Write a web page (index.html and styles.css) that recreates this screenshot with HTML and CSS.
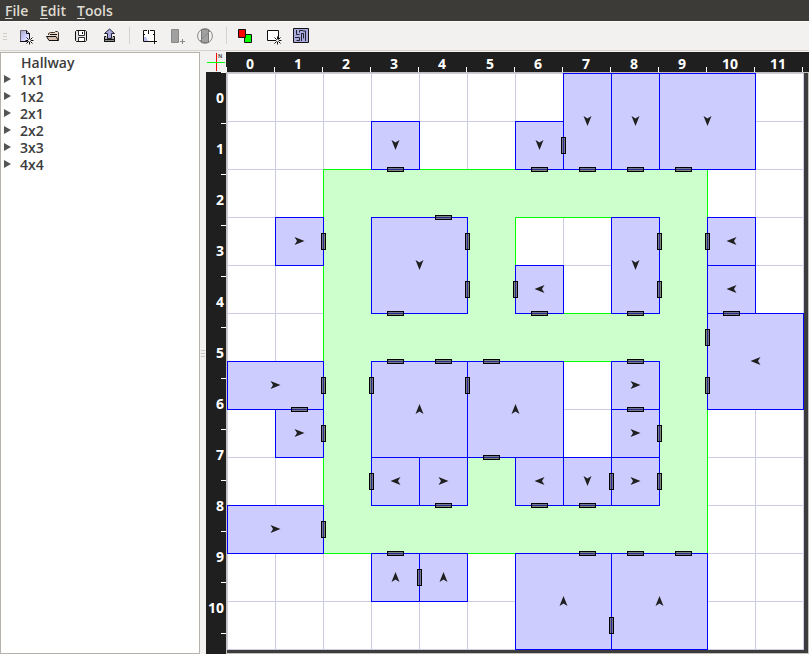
FILE: index.html
```html
<!DOCTYPE html>
<html lang="en">
<head>
<meta charset="utf-8">
<title>Map Editor</title>
<link rel="stylesheet" href="styles.css">
</head>
<body>
<nav class="menubar">
  <span class="menu menu-file"><u>F</u>ile</span>
  <span class="menu menu-edit"><u>E</u>dit</span>
  <span class="menu menu-tools"><u>T</u>ools</span>
</nav>
<div class="toolbar">
  <div class="handle"><i></i><i></i><i></i></div>
  <div class="tool"><svg viewBox="0 0 16 16"><defs><linearGradient id="page" x1="0" y1="0" x2="1" y2="1"><stop offset="0" stop-color="#aab"/><stop offset=".5" stop-color="#ccf"/><stop offset="1" stop-color="#fff"/></linearGradient></defs><path d="M2.5 2.5h6l3 3v8h-9z" fill="url(#page)" stroke="#667" /><path d="M2 13.5h7M8.500 2.500v3h3v3" fill="none" stroke="#111"/><use href="#star" x="11.500" y="12.500"/></svg></div>
  <div class="tool"><svg viewBox="0 0 16 16"><path d="M2.500 7v-1.500l2-1h4l1-1h2l1 1V12" fill="#e8d8cc" stroke="#432"/><path d="M.5 8.500h9.500l2.500 4H3z" fill="#d8c0b0" stroke="#111"/><path d="M4 6.500h7" stroke="#111"/></svg></div>
  <div class="tool"><svg viewBox="0 0 16 16"><path d="M2.500 2.500h9l1 1v9l-1 1h-9l-1-1v-9z" fill="#e4e4e8" stroke="#111"/><path d="M4.500 3v4.500h6V3M4.500 13V9.500h6V13" fill="#fff" stroke="#333"/><path d="M8.500 4v2" stroke="#111"/></svg></div>
  <div class="tool"><svg viewBox="0 0 16 16"><path d="M4 8.500H2.500v5h10v-5H11" fill="#aaa" stroke="#111"/><path d="M2.500 11.500h10v2h-10z" fill="#889088" stroke="#111"/><path d="M5.500 10.500v-5h-3l5-4.500 5 4.500h-3v5z" fill="#a8a8dd" stroke="#223"/></svg></div>
  <div class="separator"></div>
  <div class="tool"><svg viewBox="0 0 16 16"><path d="M2.500 2.500h11v11h-11z" fill="#fff"/><path d="M3 9h2l2 4H3z" fill="#bbe"/><path d="M6 2.500H2.500v11H11M9 2.500h4.500V11M7.500 2v4M2 6.500h2M12 6.500h2" fill="none" stroke="#111"/><path d="M13.500 11v5M11 13.500h5" stroke="#fff" stroke-width="2"/><path d="M13.500 11v5M11 13.500h5" stroke="#111"/></svg></div>
  <div class="tool"><svg viewBox="0 0 16 16"><path d="M2.500 1.500h7v13h-7z" fill="#a0a0a0" stroke="#888"/><path d="M13.500 11v5M11 13.500h5" stroke="#888"/></svg></div>
  <div class="tool"><svg viewBox="0 0 16 16"><path d="M4.500 1.500h7v13h-7z" fill="#a0a0a0" stroke="#777"/><circle cx="8" cy="8" r="7.400" fill="none" stroke="#888"/><path d="M3 13L13 3" stroke="#888"/></svg></div>
  <div class="separator separator-wide"></div>
  <div class="tool"><svg viewBox="0 0 16 16"><path d="M7.500 6.500h7v8h-7z" fill="#0f0" stroke="#111"/><path d="M1.500 1.500h7v8h-7z" fill="#f00" stroke="#111"/></svg></div>
  <div class="tool"><svg viewBox="0 0 16 16"><path d="M2.500 2.500h11v10h-11z" fill="#fff" stroke="#111"/><use href="#star" x="12.500" y="12.500"/></svg></div>
  <div class="tool"><svg viewBox="0 0 16 16"><path d="M.5.5h15v14H.5z" fill="#aaaadd" stroke="#111"/><path d="M3.500 2v4.500h3M6.500 2.500H10M6.500 2.500v2M2 9.500h4.500v3M3.500 12.500h3M8.500 13V5.500h2v5M10.500 5.500h-2M12.500 13V3H10" fill="none" stroke="#223"/></svg></div>
</div>
<main class="workspace">
  <ul class="palette">
    <li class="leaf">Hallway</li>
    <li class="branch">1x1</li>
    <li class="branch">1x2</li>
    <li class="branch">2x1</li>
    <li class="branch">2x2</li>
    <li class="branch">3x3</li>
    <li class="branch">4x4</li>
  </ul>
  <div class="splitter"><i></i><i></i><i></i></div>
  <section class="editor">
    <svg class="compass" viewBox="0 0 20 20"><path d="M10.500 1v18" stroke="#f00"/><path d="M1 10.500h18" stroke="#0f0"/><text x="12" y="6">N</text></svg>
    <div class="ruler ruler-x"></div>
    <div class="ruler ruler-y"></div>
    <div class="viewport"><svg class="plan" viewBox="0 0 577 577"></svg></div>
  </section>
</main>
<svg class="symbols" width="0" height="0"><defs>
  <g id="star"><path d="M0-4v8M-4 0h8M-3-3l6 6M3-3l-6 6" stroke="#111" fill="none"/><circle r="1.300" fill="#fff"/></g>
  <path id="arrow" d="M5 0L-5-4L-2.500 0L-5 4Z"/>
</defs></svg>
<script src="plan.js"></script>
</body>
</html>
```
FILE: styles.css
```css
* { box-sizing: border-box; }
body {
  margin: 0;
  width: 809px;
  height: 654px;
  overflow: hidden;
  display: flex;
  flex-direction: column;
  background: #f2f1f0;
  color: #3c3c3c;
  font: 600 14px/17px "Open Sans", "Noto Sans", sans-serif;
}
.symbols { position: absolute; }
.menubar {
  height: 21px;
  flex: none;
  display: flex;
  padding-left: 5px;
  background: #3c3b37;
  color: #dfdbd2;
  line-height: 22px;
}
.menu u { text-underline-offset: 2px; text-decoration-thickness: 1px; }
.menu-file { width: 35px; }
.menu-edit { width: 37px; }
.toolbar {
  height: 30px;
  flex: none;
  display: flex;
  border-top: 1px solid #fbfbfa;
  border-bottom: 1px solid #d6d3d0;
}
.handle {
  width: 12px;
  padding: 11px 0 0 3px;
  display: flex;
  flex-direction: column;
  gap: 2px;
}
.handle i { width: 4px; height: 1px; background: #d0cdc9; }
.tool { width: 28px; padding: 6px 6px 0; }
.tool svg { display: block; width: 16px; height: 16px; overflow: visible; }
.separator { width: 11px; padding: 5px 5px 0; }
.separator-wide { width: 12px; padding-left: 7px; padding-right: 4px; }
.separator::before { content: ""; display: block; height: 17px; width: 1px; background: #d5d2ce; }
.workspace { flex: 1; display: flex; padding-top: 1px; min-height: 0; }
.palette {
  width: 200px;
  height: 602px;
  margin: 0;
  padding: 1px 0 0;
  list-style: none;
  background: #fff;
  border: 1px solid #b6b2ab;
}
.palette li { height: 17px; padding-left: 19px; }
.palette .leaf { padding-left: 20px; }
.branch { display: flex; }
.branch::before {
  content: "";
  width: 7px;
  height: 8px;
  margin: 4px 9px 0 -16px;
  background: #555;
  clip-path: polygon(0 0, 100% 50%, 0 100%);
}
.splitter {
  width: 6px;
  display: flex;
  flex-direction: column;
  justify-content: center;
  align-items: center;
  gap: 2px;
}
.splitter i { width: 4px; height: 1px; background: #ccc8c4; }
.editor {
  flex: 1;
  display: grid;
  grid-template-columns: 20px 583px;
  grid-template-rows: 20px 582px;
}
.compass { width: 20px; height: 20px; }
.compass text { font: 700 6px "Liberation Sans", sans-serif; fill: #555; }
.ruler {
  background: #1f1f1f;
  color: #fff;
  display: flex;
  font: 700 14px/20px "Noto Sans", sans-serif;
}
.ruler-x { overflow: hidden; }
.ruler-y { flex-direction: column; overflow: hidden; }
.ruler-x span {
  flex: 0 0 48px;
  height: 24px;
  text-align: center;
  line-height: 24px;
  background: linear-gradient(#fff, #fff) 0 15px / 1px 5px no-repeat;
}
.ruler-y span {
  flex: 0 0 48px;
  text-align: right;
  padding-right: 2px;
  line-height: 51px;
  background: linear-gradient(#fff, #fff) 15px 0 / 5px 1px no-repeat;
}
.ruler-x span:last-child, .ruler-y span:last-child { flex-basis: 7px; }
.viewport {
  background: #3c3c3c;
  border: 1px solid #c4c0bb;
}
.plan { display: block; width: 577px; height: 577px; background: #fff; }
.grid { stroke: #cbcbe6; fill: none; }
.hall { fill: #ccffcc; stroke: #00ff00; fill-rule: evenodd; }
.room { fill: #ccccff; stroke: #0000ff; }
.door { fill: rgba(64, 64, 64, .6); stroke: #000; }
.heading { fill: #202020; }
```
FILE: plan.js
```js
const CELL = 48;
const CELLS = 12;

// x, y, width, height in cells, and the angle of the heading arrow
const rooms = [
  [7,0,1,2,90],[8,0,1,2,90],[9,0,2,2,90],[3,1,1,1,90],[6,1,1,1,90],
  [1,3,1,1,0],[3,3,2,2,90],[8,3,1,2,90],[10,3,1,1,180],[10,4,1,1,180],
  [6,4,1,1,180],[10,5,2,2,180],[0,6,2,1,0],[1,7,1,1,0],[3,6,2,2,270],
  [5,6,2,2,270],[8,6,1,1,0],[8,7,1,1,0],[3,8,1,1,180],[4,8,1,1,0],
  [6,8,1,1,180],[7,8,1,1,90],[8,8,1,1,0],[0,9,2,1,0],[3,10,1,1,270],
  [4,10,1,1,270],[6,10,2,2,270],[8,10,2,2,270]
];
// column, grid line
const doorsAcross = [
  [3,2],[6,2],[7,2],[8,2],[9,2],[4,3],[3,5],[6,5],[8,5],[10,5],
  [3,6],[4,6],[5,6],[8,6],[1,7],[8,7],[5,8],[4,9],[6,9],[7,9],
  [3,10],[7,10],[8,10],[9,10]
];
// grid line, row
const doorsDown = [
  [7,1],[2,3],[2,6],[2,7],[2,9],[5,3],[5,4],[5,6],[3,6],[3,8],[6,4],
  [9,3],[9,4],[9,7],[9,8],[10,3],[10,5],[10,6],[8,8],[8,11],[4,10]
];

const at = n => n * CELL + 0.5;
let out = '';
for (let i = 0; i <= CELLS; i++) {
  out += `<path class="grid" d="M${at(i)} 0V577M0 ${at(i)}H577"/>`;
}
const loop = pts => 'M' + pts.map(p => `${at(p[0])} ${at(p[1])}`).join('L') + 'Z';
out += `<path class="hall" d="${loop([[2,2],[10,2],[10,10],[2,10]])}${loop([[6,3],[8,3],[8,5],[6,5]])}${loop([[7,6],[8,6],[8,8],[7,8]])}"/>`;
for (const [x, y, w, h] of rooms) {
  out += `<rect class="room" x="${at(x)}" y="${at(y)}" width="${w * CELL}" height="${h * CELL}"/>`;
}
for (const [x, y, w, h, a] of rooms) {
  out += `<use class="heading" href="#arrow" transform="translate(${(x + w / 2) * CELL + 0.5} ${(y + h / 2) * CELL}) rotate(${a})"/>`;
}
for (const [x, y] of doorsAcross) {
  out += `<rect class="door" x="${at(x) + 16}" y="${at(y) - 2}" width="16" height="4"/>`;
}
for (const [x, y] of doorsDown) {
  out += `<rect class="door" x="${at(x) - 2}" y="${at(y) + 16}" width="4" height="16"/>`;
}
document.querySelector('.plan').innerHTML = out;

for (const ruler of document.querySelectorAll('.ruler')) {
  for (let i = 0; i <= CELLS; i++) {
    const mark = document.createElement('span');
    mark.textContent = i < CELLS ? i : '';
    ruler.append(mark);
  }
}
```
